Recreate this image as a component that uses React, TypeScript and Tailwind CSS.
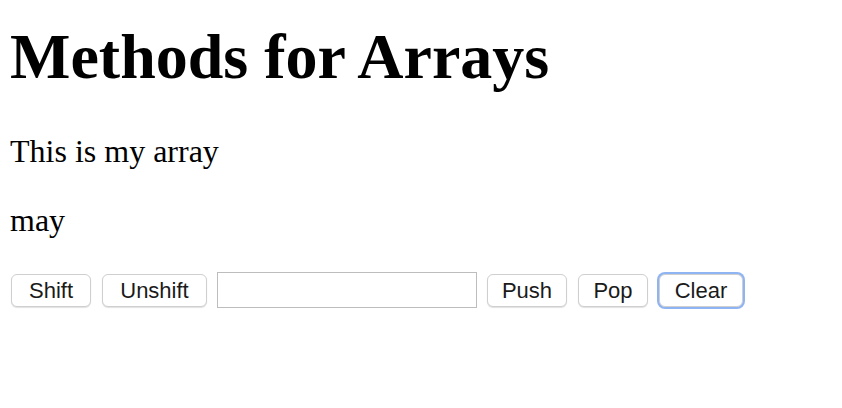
export default function App() {
  const btn =
    "h-[33px] rounded-[6px] border border-[#cfcfcf] bg-white text-[22px] leading-none text-[#1a1a1a] shadow-[0_1px_1px_rgba(0,0,0,0.12)] flex items-center justify-center pt-[1px]";

  return (
    <div className="min-h-[408px] bg-white pl-[10px] text-black [font-family:'Liberation_Serif',serif]">
      <h1 className="pt-[20px] text-[64px] leading-[74px] font-bold">Methods for Arrays</h1>
      <p className="mt-[39px] text-[32px] leading-[37px]">This is my array</p>
      <p className="mt-[32px] text-[32px] leading-[37px]">may</p>

      <div className="mt-[33px] flex items-center [font-family:'Liberation_Sans',Arial,sans-serif]">
        <button className={`${btn} ml-[1px] w-[80px]`}>Shift</button>
        <button className={`${btn} ml-[11px] w-[105px]`}>Unshift</button>
        <input
          type="text"
          className="ml-[10px] h-[36px] w-[260px] border border-[#bdbdbd] bg-white px-1 text-[20px] outline-none"
        />
        <button className={`${btn} ml-[10px] w-[80px]`}>Push</button>
        <button className={`${btn} ml-[11px] w-[70px]`}>Pop</button>
        <button
          className={`${btn} ml-[11px] w-[84px] border-[#5f93ee] ring-[2px] ring-[#8fb4f4]`}
        >
          Clear
        </button>
      </div>
    </div>
  );
}
